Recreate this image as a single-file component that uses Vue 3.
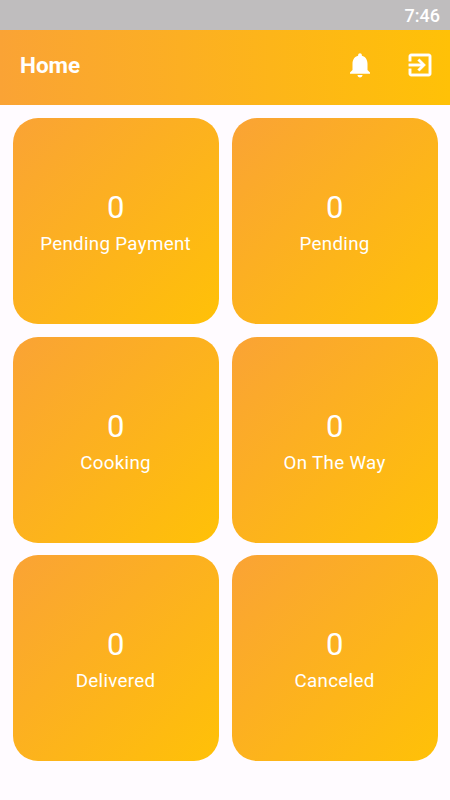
<script setup>
const cards = [
  { count: 0, label: 'Pending Payment' },
  { count: 0, label: 'Pending' },
  { count: 0, label: 'Cooking' },
  { count: 0, label: 'On The Way' },
  { count: 0, label: 'Delivered' },
  { count: 0, label: 'Canceled' },
]
</script>

<template>
  <div class="screen">
    <div class="status">7:46</div>
    <header class="bar">
      <h1 class="title">Home</h1>
      <div class="actions">
        <svg class="icon" viewBox="0 0 24 24"><path d="M12 22c1.1 0 2-.9 2-2h-4c0 1.1.89 2 2 2zm6-6v-5c0-3.07-1.64-5.64-4.5-6.32V4c0-.83-.67-1.5-1.5-1.5s-1.5.67-1.5 1.5v.68C7.63 5.36 6 7.92 6 11v5l-2 2v1h16v-1l-2-2z" /></svg>
        <svg class="icon exit" viewBox="0 0 24 24"><path d="M10.09 15.59L11.5 17l5-5-5-5-1.41 1.41L12.67 11H3v2h9.67l-2.58 2.59zM19 3H5c-1.11 0-2 .9-2 2v4h2V5h14v14H5v-4H3v4c0 1.1.89 2 2 2h14c1.1 0 2-.9 2-2V5c0-1.1-.9-2-2-2z" /></svg>
      </div>
    </header>
    <main class="grid">
      <section v-for="c in cards" :key="c.label" class="card">
        <div class="count">{{ c.count }}</div>
        <div class="label">{{ c.label }}</div>
      </section>
    </main>
  </div>
</template>

<style>
body {
  background: #fffbff;
}
</style>

<style scoped>
.screen {
  height: 800px;
  overflow: hidden;
  background: #fffbff;
  color: #fff;
  font-family: Roboto, sans-serif;
}
.status {
  box-sizing: border-box;
  height: 30px;
  padding: 1px 10px 0 0;
  background: #bfbdbe;
  font-size: 18px;
  font-weight: 500;
  line-height: 30px;
  text-align: right;
}
.bar {
  display: flex;
  align-items: center;
  justify-content: space-between;
  box-sizing: border-box;
  height: 75px;
  padding: 0 15px 5px 20px;
  background: linear-gradient(90deg, #faa335, #ffc107);
}
.title {
  margin: 0;
  font-size: 22.5px;
  font-weight: 700;
  line-height: 30px;
}
.actions {
  display: flex;
  gap: 30px;
}
.icon {
  width: 30px;
  height: 30px;
  fill: #fff;
}
.exit {
  stroke: #fff;
  stroke-width: 0.3;
}
.grid {
  display: grid;
  grid-template-columns: 206px 206px;
  grid-auto-rows: 206px;
  gap: 12.75px 13px;
  padding: 12.8px 12.6px;
}
.card {
  display: flex;
  flex-direction: column;
  align-items: center;
  justify-content: center;
  box-sizing: border-box;
  padding-top: 9.2px;
  border-radius: 25px;
  background: linear-gradient(135deg, #faa335, #ffc107);
}
.count {
  font-size: 31px;
  line-height: 37px;
}
.label {
  font-size: 18.75px;
  line-height: 36px;
  letter-spacing: 0.31px;
}
</style>
